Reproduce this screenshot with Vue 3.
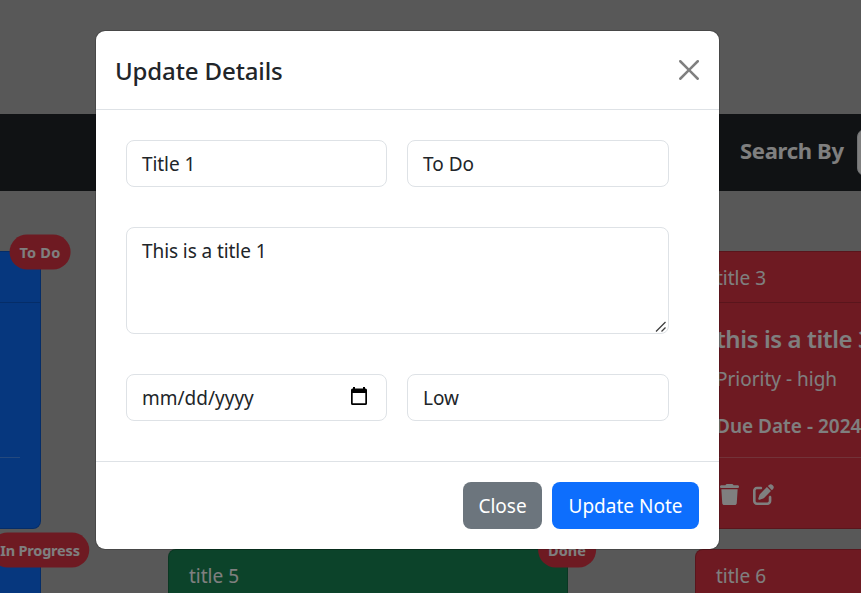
<script setup>
const cards = [
  { status: 'To Do', tone: 'blue', title: 'title 1', heading: 'this is a title 1', priority: 'low', due: '2024-01-10' },
  { status: 'To Do', tone: 'green', title: 'title 2', heading: 'this is a title 2', priority: 'medium', due: '2024-01-12' },
  { status: 'Done', tone: 'red', title: 'title 3', heading: 'this is a title 3', priority: 'high', due: '2024-01-15' },
  { status: 'In Progress', tone: 'blue', title: 'title 4', heading: 'this is a title 4', priority: 'low', due: '2024-01-18' },
  { status: 'Done', tone: 'green', title: 'title 5', heading: 'this is a title 5', priority: 'medium', due: '2024-01-20' },
  { status: 'To Do', tone: 'red', title: 'title 6', heading: 'this is a title 6', priority: 'high', due: '2024-01-22' }
]
</script>

<template>
  <div class="screen">
    <div class="page">
      <nav class="navbar">
        <span class="search-label">Search By</span>
        <span class="search-box"></span>
      </nav>
      <main class="board">
        <article v-for="card in cards" :key="card.title" class="card" :class="card.tone">
          <span class="badge" :class="{ progress: card.status === 'In Progress', todo: card.status === 'To Do' }">{{ card.status }}</span>
          <header class="card-head">{{ card.title }}</header>
          <div class="card-body">
            <h5>{{ card.heading }}</h5>
            <p class="priority">Priority - {{ card.priority }}</p>
            <p class="due">Due Date - {{ card.due }}</p>
            <hr />
            <div class="actions">
              <svg class="trash" viewBox="0 0 448 512" preserveAspectRatio="none"><path d="M135.200 17.700L128 32H32C14.300 32 0 46.300 0 64S14.300 96 32 96H416c17.700 0 32-14.300 32-32s-14.300-32-32-32H320l-7.200-14.300C307.400 6.800 296.300 0 284.200 0H163.800c-12.100 0-23.200 6.800-28.600 17.700zM416 128H32L53.200 467c1.600 25.300 22.600 45 47.900 45H346.900c25.300 0 46.300-19.700 47.900-45L416 128z" /></svg>
              <svg class="edit" viewBox="0 0 512 512"><path d="M471.600 21.700c-21.900-21.900-57.300-21.900-79.200 0L362.300 51.700l97.900 97.900 30.100-30.100c21.900-21.900 21.900-57.300 0-79.200L471.600 21.700zm-299.200 220c-6.100 6.100-10.800 13.600-13.500 21.900l-29.600 88.800c-2.900 8.600-.6 18.100 5.800 24.600s15.900 8.700 24.600 5.800l88.800-29.600c8.200-2.700 15.700-7.400 21.900-13.500L437.700 172.300 339.700 74.300 172.400 241.700zM96 64C43 64 0 107 0 160V416c0 53 43 96 96 96H352c53 0 96-43 96-96V320c0-17.700-14.300-32-32-32s-32 14.300-32 32v96c0 17.700-14.300 32-32 32H96c-17.700 0-32-14.300-32-32V160c0-17.700 14.300-32 32-32h96c17.700 0 32-14.300 32-32s-14.300-32-32-32H96z" /></svg>
            </div>
          </div>
        </article>
      </main>
    </div>

    <div class="backdrop">
      <section class="modal" role="dialog" aria-label="Update Details">
        <header class="modal-head">
          <h1>Update Details</h1>
          <svg class="close" viewBox="0 0 16 16"><path d="M.293.293a1 1 0 0 1 1.414 0L8 6.586 14.293.293a1 1 0 1 1 1.414 1.414L9.414 8l6.293 6.293a1 1 0 0 1-1.414 1.414L8 9.414l-6.293 6.293a1 1 0 0 1-1.414-1.414L6.586 8 .293 1.707a1 1 0 0 1 0-1.414z" /></svg>
        </header>
        <form class="modal-body">
          <div class="control"><span class="snug">Title 1</span></div>
          <div class="control"><span>To Do</span></div>
          <div class="control area">
            <span class="snug">This is a title 1</span>
            <svg class="grip" viewBox="0 0 12 12"><path d="M1 10.500 10.500 1M6.500 10.500 10.500 6.500" /></svg>
          </div>
          <div class="control date">
            <span>mm/dd/yyyy</span>
            <svg class="calendar" viewBox="0 0 16 18"><path fill-rule="evenodd" d="M2 0h2v1.500h8V0h2v1.500h.5A1.500 1.500 0 0 1 16 3v13.500a1.500 1.500 0 0 1-1.500 1.500h-13A1.500 1.500 0 0 1 0 16.500V3a1.500 1.500 0 0 1 1.500-1.500H2zM1.700 6v10.300h12.600V6z" /></svg>
          </div>
          <div class="control"><span>Low</span></div>
        </form>
        <footer class="modal-foot">
          <button class="btn secondary" type="button">Close</button>
          <button class="btn primary" type="button">Update Note</button>
        </footer>
      </section>
    </div>
  </div>
</template>

<style>
body {
  margin: 0;
  overflow: hidden;
}
</style>

<style scoped>
* {
  box-sizing: border-box;
}
.screen {
  position: relative;
  width: 861px;
  height: 593px;
  overflow: hidden;
  background: #b0b0b0;
  font-family: "Noto Sans", "Open Sans", sans-serif;
  font-size: 19px;
  line-height: 30px;
  color: #212529;
}
.page {
  padding-top: 114px;
}
.navbar {
  display: flex;
  align-items: center;
  height: 77px;
  padding-left: 740px;
  background: #212529;
  color: #fff;
}
.search-label {
  flex: none;
  width: 117px;
  padding-bottom: 5px;
  font-size: 22px;
  font-weight: 700;
  letter-spacing: -0.3px;
  white-space: nowrap;
}
.search-box {
  flex: none;
  width: 200px;
  height: 47px;
  border: 1px solid #dee2e6;
  border-radius: 8px;
  background: #fff;
}
.board {
  display: grid;
  grid-template-columns: repeat(3, 400px);
  gap: 20px 127px;
  margin-left: -359px;
  padding-top: 60px;
}
.card {
  position: relative;
  height: 278px;
  border: 1px solid rgba(0, 0, 0, 0.175);
  border-radius: 8px;
  color: #fff;
  white-space: nowrap;
}
.blue { background: #0d6efd; }
.green { background: #198754; }
.red { background: #dc3545; }
.badge {
  position: absolute;
  top: 0;
  left: 100%;
  transform: translate(-50%, -50%);
  height: 35px;
  padding: 0 10px;
  border-radius: 18px;
  background: #dc3545;
  font-size: 14.500px;
  font-weight: 700;
  line-height: 35px;
}
.badge.progress {
  letter-spacing: -0.2px;
}
.badge.todo {
  letter-spacing: 0.2px;
}
.card-head {
  height: 51px;
  padding: 11px 20px 9px;
  border-bottom: 1px solid rgba(0, 0, 0, 0.175);
}
.card-body {
  padding: 21px 20px 20px;
}
h5 {
  margin: 0 0 10px;
  font-size: 24px;
  font-weight: 600;
  line-height: 30px;
  letter-spacing: -0.4px;
}
p {
  margin: 0;
}
.due {
  margin-top: 17px;
  font-weight: 600;
}
hr {
  height: 1px;
  margin: 16px 0 26px;
  border: 0;
  background: rgba(255, 255, 255, 0.25);
}
.actions {
  display: flex;
  gap: 14px;
  padding-left: 4px;
}
.actions svg {
  fill: #fff;
}
.trash {
  width: 19px;
  height: 21px;
}
.edit {
  width: 21px;
  height: 21px;
}
.backdrop {
  position: absolute;
  inset: 0;
  display: flex;
  align-items: flex-start;
  padding: 30px 0 0 95px;
  background: rgba(0, 0, 0, 0.5);
}
.modal {
  width: 625px;
  height: 520px;
  border: 1px solid rgba(0, 0, 0, 0.175);
  border-radius: 10px;
  background: #fff;
  background-clip: padding-box;
}
.modal-head {
  display: flex;
  align-items: center;
  justify-content: space-between;
  height: 79px;
  padding: 0 20px 0 19px;
  border-bottom: 1px solid #dee2e6;
}
h1 {
  margin: 0;
  padding-top: 2px;
  font-size: 24px;
  font-weight: 500;
  line-height: 38px;
  letter-spacing: -0.12px;
}
.close {
  width: 20px;
  height: 20px;
  fill: #808080;
}
.modal-body {
  display: grid;
  grid-template-columns: 261px 262px;
  grid-template-rows: 47px 107px 47px;
  gap: 40px 20px;
  height: 351px;
  padding: 30px;
}
.control {
  display: flex;
  padding: 8px 15px;
  border: 1px solid #dee2e6;
  border-radius: 8px;
  white-space: nowrap;
}
.snug {
  letter-spacing: -0.08px;
}
.area {
  position: relative;
  grid-column: 1 / 3;
}
.grip {
  position: absolute;
  right: 1px;
  bottom: 0;
  width: 12px;
  height: 12px;
  fill: none;
  stroke: #404040;
  stroke-width: 1.300;
}
.date {
  justify-content: space-between;
  padding-right: 19px;
}
.calendar {
  width: 16px;
  height: 18px;
  margin-top: 4px;
}
.modal-foot {
  display: flex;
  justify-content: flex-end;
  gap: 10px;
  padding: 20px;
  border-top: 1px solid #dee2e6;
}
.btn {
  display: flex;
  justify-content: center;
  align-items: center;
  height: 47px;
  padding: 0;
  border: 0;
  border-radius: 8px;
  color: #fff;
  font: inherit;
}
.secondary {
  width: 79px;
  background: #6c757d;
}
.primary {
  width: 147px;
  background: #0d6efd;
}
</style>
